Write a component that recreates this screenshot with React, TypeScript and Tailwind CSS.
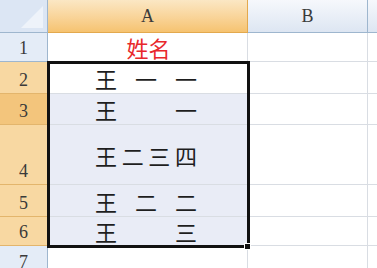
const ROWS = [
  { n: '1', h: 'h-[29px]', hdr: 'bg-[#e4ecf7] border-[#9eb6ce]', cell: 'bg-white', text: null as string[] | null },
  { n: '2', h: 'h-[32px]', hdr: 'bg-[#f8d8a2] border-[#e3b56c]', cell: 'bg-white', text: ['王', '一', '一'] },
  { n: '3', h: 'h-[31px]', hdr: 'bg-[#f3c57c] border-[#e3b56c]', cell: 'bg-[#e9ecf6]', text: ['王', '一'] },
  { n: '4', h: 'h-[60px]', hdr: 'bg-[#f8d8a2] border-[#e3b56c]', cell: 'bg-[#e9ecf6]', text: ['王', '二', '三', '四'] },
  { n: '5', h: 'h-[32px]', hdr: 'bg-[#f8d8a2] border-[#e3b56c]', cell: 'bg-[#e9ecf6]', text: ['王', '二', '二'] },
  { n: '6', h: 'h-[29px]', hdr: 'bg-[#f8d8a2] border-[#e3b56c]', cell: 'bg-[#e9ecf6]', text: ['王', '三'] },
  { n: '7', h: 'h-[30px]', hdr: 'bg-[#e4ecf7] border-[#9eb6ce]', cell: 'bg-white', text: null },
];

const serif = { fontFamily: '"Liberation Serif", serif' };
const cjk = { fontFamily: '"Noto Sans CJK SC", sans-serif' };

export default function App() {
  return (
    <div className="w-[377px] h-[268px] overflow-hidden bg-white relative">
      {/* column headers */}
      <div className="flex h-[33px]">
        <div className="w-[48px] shrink-0 bg-[#dce6f4] border-r border-b border-[#9eb6ce] relative overflow-hidden">
          <div className="absolute right-[4px] bottom-[4px] w-0 h-0 border-l-[22px] border-l-transparent border-b-[22px] border-b-[#eef3fa]" />
        </div>
        <div
          className="w-[200px] shrink-0 flex items-center justify-center text-[18px] text-[#3a3a3a] bg-gradient-to-b from-[#fbe7c4] to-[#f6c370] border-r border-b border-[#e3a94e]"
          style={serif}
        >
          A
        </div>
        <div
          className="w-[120px] shrink-0 flex items-center justify-center text-[18px] text-[#3a3a3a] bg-gradient-to-b from-[#f6f8fc] to-[#dde6f2] border-r border-b border-[#9eb6ce]"
          style={serif}
        >
          B
        </div>
        <div className="flex-1 bg-gradient-to-b from-[#f6f8fc] to-[#dde6f2] border-b border-[#9eb6ce]" />
      </div>

      {ROWS.map((r) => (
        <div key={r.n} className={`flex ${r.h}`}>
          <div
            className={`w-[48px] shrink-0 flex items-end justify-center text-[18px] leading-none text-[#3a3a3a] border-r border-b ${r.hdr}`}
            style={serif}
          >
            <span className="mb-[4px]">{r.n}</span>
          </div>
          <div className={`w-[200px] shrink-0 flex items-center justify-center border-r border-b border-[#d9dde3] ${r.cell}`}>
            {r.n === '1' && (
              <span className="text-[22px] leading-none text-[#e8282c] pl-[2px]" style={cjk}>
                姓名
              </span>
            )}
            {r.text && (
              <div className="w-[102px] flex justify-between text-[22px] text-[#1e1e1e] leading-none ml-[-3px]" style={cjk}>
                {r.text.map((c, i) => (
                  <span key={i}>{c}</span>
                ))}
              </div>
            )}
          </div>
          <div className="w-[120px] shrink-0 bg-white border-r border-b border-[#d9dde3]" />
          <div className="flex-1 bg-white border-b border-[#d9dde3]" />
        </div>
      ))}

      {/* selection outline A2:A6 */}
      <div className="absolute left-[47px] top-[61px] w-[203px] h-[187px] border-[3px] border-[#111]" />
      <div className="absolute left-[244px] top-[243px] w-[7px] h-[7px] bg-[#111] border border-white" />
    </div>
  );
}
